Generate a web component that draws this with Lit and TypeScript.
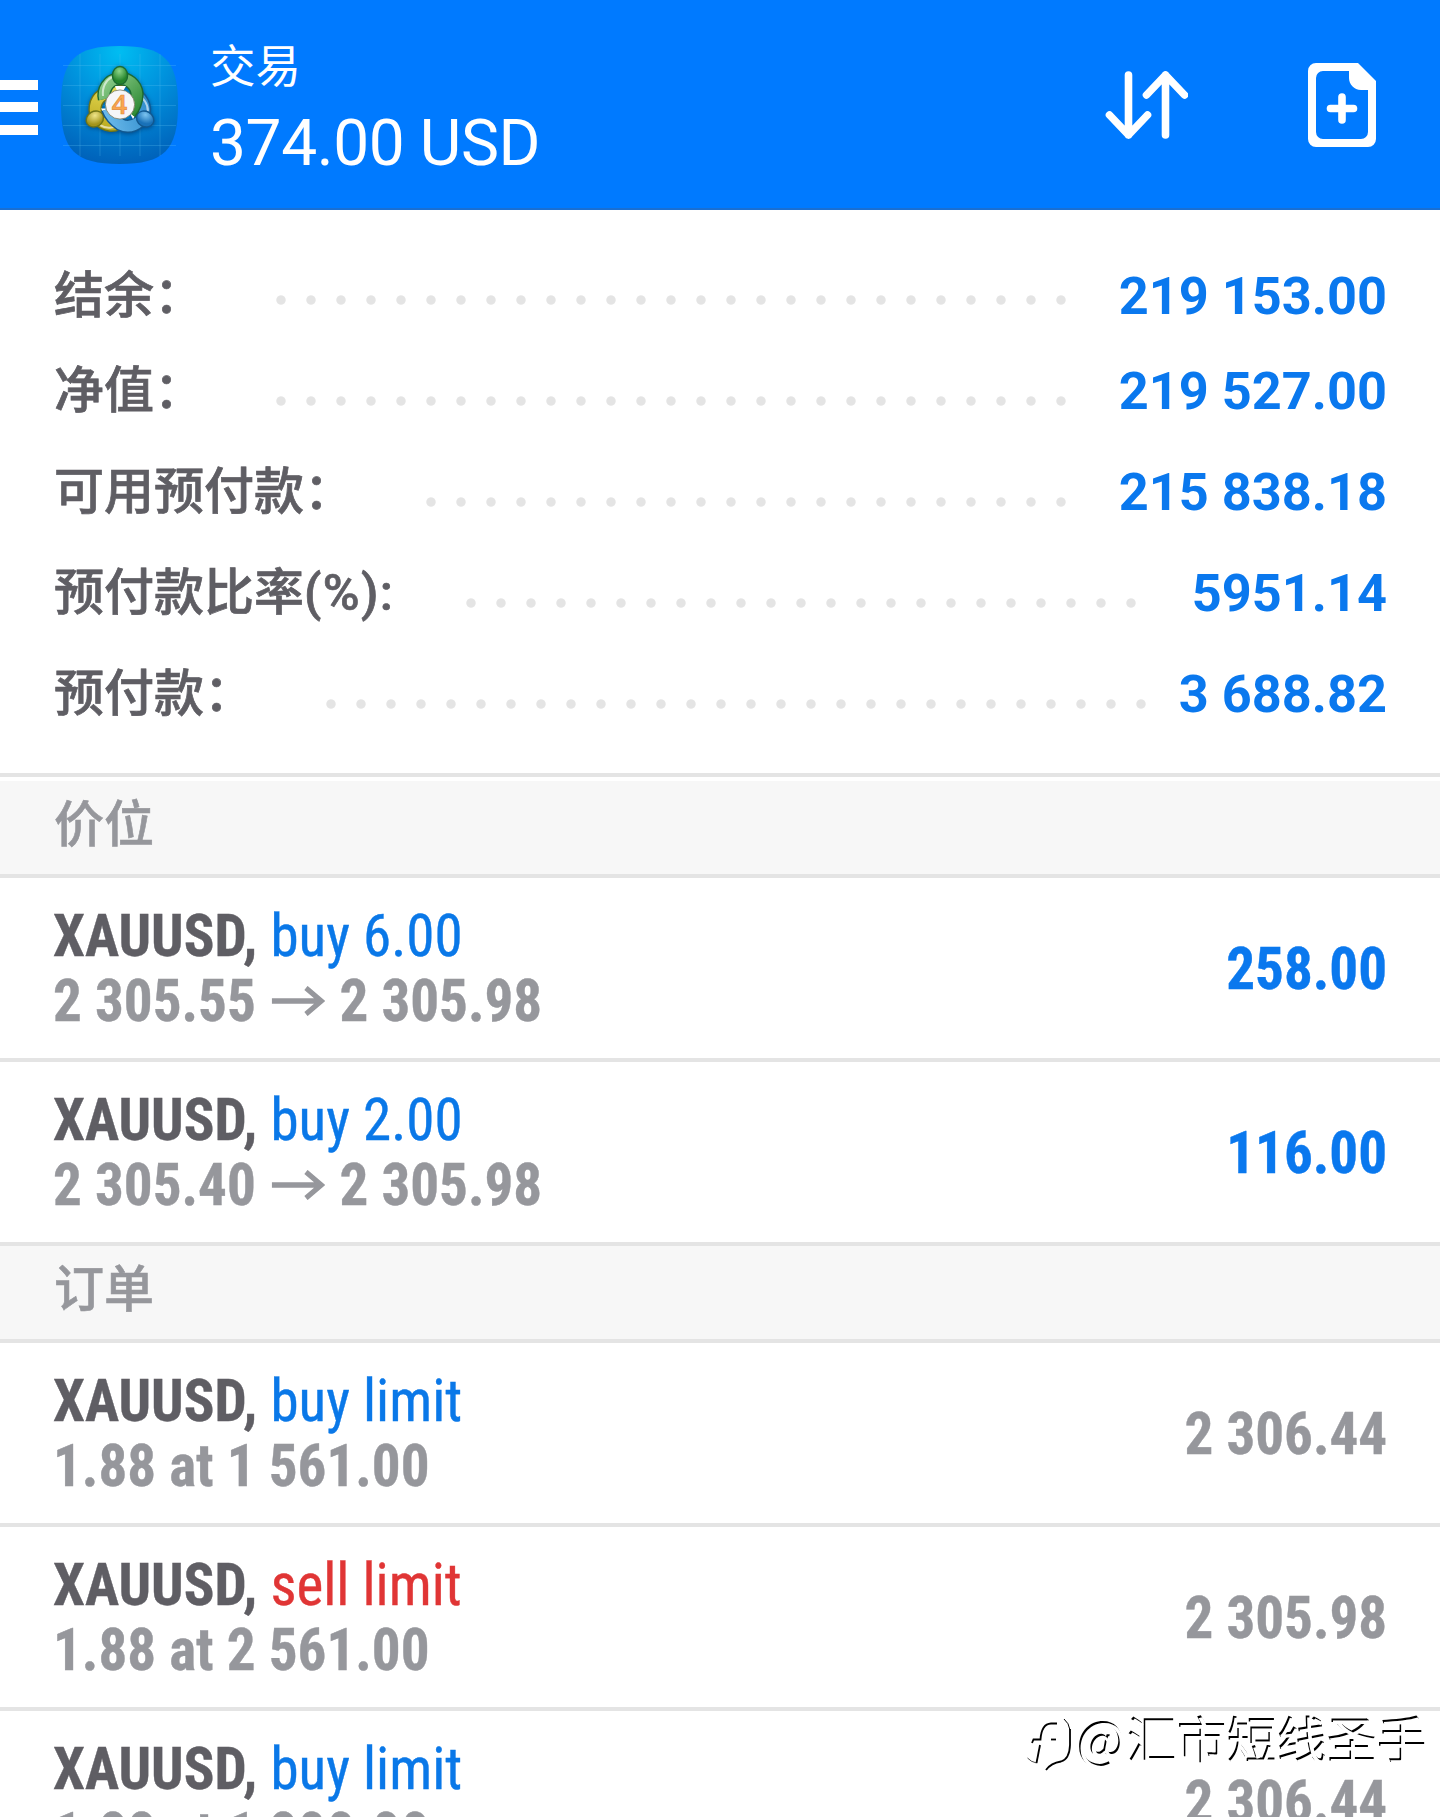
import { LitElement, html, css, svg } from "lit";
import { customElement, property } from "lit/decorators.js";

interface SummaryRow {
  label: string;
  unit?: string;
  value: string;
  dots: number;
}

interface TradeRow {
  symbol: string;
  side: "buy" | "sell";
  action: string;
  detail: string;
  target?: string;
  value: string;
  profit?: boolean;
}

const DOT_PITCH = 30;

const SUMMARY: SummaryRow[] = [
  { label: "结余：", value: "219 153.00", dots: 27 },
  { label: "净值：", value: "219 527.00", dots: 27 },
  { label: "可用预付款：", value: "215 838.18", dots: 22 },
  { label: "预付款比率", unit: "(%):", value: "5951.14", dots: 23 },
  { label: "预付款：", value: "3 688.82", dots: 28 },
];

const POSITIONS: TradeRow[] = [
  { symbol: "XAUUSD", side: "buy", action: "buy 6.00", detail: "2 305.55", target: "2 305.98", value: "258.00", profit: true },
  { symbol: "XAUUSD", side: "buy", action: "buy 2.00", detail: "2 305.40", target: "2 305.98", value: "116.00", profit: true },
];

const ORDERS: TradeRow[] = [
  { symbol: "XAUUSD", side: "buy", action: "buy limit", detail: "1.88 at 1 561.00", value: "2 306.44" },
  { symbol: "XAUUSD", side: "sell", action: "sell limit", detail: "1.88 at 2 561.00", value: "2 305.98" },
  { symbol: "XAUUSD", side: "buy", action: "buy limit", detail: "1.88 at 1 800.00", value: "2 306.44" },
];

const GRID = [19, 39, 59, 79, 99];

const BODY = "M43.5 53 A16.5 16.5 0 1 1 76 48 Q75.5 59 69 67";

// One figure of the trefoil, drawn upright and rotated for the other two.
const member = (angle: number, id: string, edge: string) => svg`
  <g transform="rotate(${angle} 59 58.5)" fill="none">
    <path d=${BODY} stroke=${edge} stroke-width="13.5" />
    <path d=${BODY} stroke="url(#${id})" stroke-width="10.6" />
    <path d="M42 50 C41 41 45 34 51 31" stroke="#fff" stroke-opacity=".6" stroke-width="2" />
    <path d="M54 40 H65 L61 47 H57 Z" fill="#fff" />
    <ellipse cx="59" cy="29.5" rx="7.6" ry="9" fill="url(#${id}h)" stroke=${edge} stroke-width="1.4" />
  </g>
`;

@customElement("app-logo")
export class AppLogo extends LitElement {
  static styles = css`
    :host { display: block; width: 118px; height: 118px; }
    svg { display: block; }
    .figures { filter: drop-shadow(0 1px 2px rgba(0, 40, 90, 0.6)); }
    text { font: 600 27px "Open Sans", sans-serif; }
  `;

  render() {
    return html`
      <svg width="118" height="118" viewBox="0 0 118 118">
        <defs>
          <radialGradient id="bg" cx=".5" cy=".05" r=".95">
            <stop offset="0" stop-color="#00bdf2" />
            <stop offset=".5" stop-color="#008edb" />
            <stop offset="1" stop-color="#0062ba" />
          </radialGradient>
          <linearGradient id="g" x1="0" y1="0" x2="1" y2="1">
            <stop offset="0" stop-color="#8fce8c" /><stop offset="1" stop-color="#2f8a35" />
          </linearGradient>
          <linearGradient id="b" x1="0" y1="0" x2="1" y2="1">
            <stop offset="0" stop-color="#2f8ccc" /><stop offset="1" stop-color="#6ab9ea" />
          </linearGradient>
          <linearGradient id="y" x1="0" y1="0" x2="1" y2="1">
            <stop offset="0" stop-color="#b9a81c" /><stop offset="1" stop-color="#e8dc58" />
          </linearGradient>
          <radialGradient id="gh" cx=".45" cy=".25" r=".8">
            <stop offset="0" stop-color="#8fd68a" /><stop offset=".7" stop-color="#25852c" />
          </radialGradient>
          <radialGradient id="bh" cx=".25" cy=".6" r=".8">
            <stop offset="0" stop-color="#7cc4f0" /><stop offset=".7" stop-color="#1971b8" />
          </radialGradient>
          <radialGradient id="yh" cx=".7" cy=".6" r=".8">
            <stop offset="0" stop-color="#efe68a" /><stop offset=".7" stop-color="#a3941a" />
          </radialGradient>
        </defs>
        <path d="M58.5 0 C103 0 117 14 117 59 C117 104 103 118 58.5 118 C14 118 0 104 0 59 C0 14 14 0 58.5 0 Z" fill="url(#bg)" />
        <g stroke="#5fc4f5" stroke-opacity=".26">
          ${GRID.map((p) => svg`
            <line x1=${p} y1="8" x2=${p} y2="110" />
            <line x1="2" y1=${p + 0.5} x2="115" y2=${p + 0.5} />
          `)}
        </g>
        <g class="figures">
          ${member(240, "y", "#6f7416")}
          ${member(120, "b", "#12588f")}
          ${member(0, "g", "#1c6a30")}
        </g>
        <circle cx="59" cy="58.5" r="14.6" fill="#f6f6f8" stroke="#7a7a60" stroke-width=".8" />
        <text x="58.5" y="68" text-anchor="middle" fill="#fba64e" stroke="#e08a3a" stroke-width=".6">4</text>
      </svg>
    `;
  }
}

@customElement("summary-row")
export class SummaryRowElement extends LitElement {
  static styles = css`
    :host {
      display: flex;
      align-items: flex-start;
      height: 101px;
      line-height: 76px;
    }
    .label {
      font-size: 50px;
      font-weight: 500;
      color: #5f5e64;
      -webkit-text-stroke: 0.7px #5f5e64;
      white-space: nowrap;
    }
    .unit { letter-spacing: 1.4px; }
    .leader {
      height: 10px;
      margin: 43px 0 0 72px;
      background: radial-gradient(circle at 5px 5px, #e4e4e4 4.2px, transparent 5.2px) 0 0 / 30px 10px repeat-x;
    }
    .value {
      margin-left: auto;
      font-size: 52.3px;
      font-weight: 700;
      color: #0a78ee;
      white-space: nowrap;
    }
    /* the first line sits a little closer to its leader */
    :host(:first-child) .label,
    :host(:first-child) .value { margin-top: 6px; }
  `;

  @property({ attribute: false }) row!: SummaryRow;

  render() {
    const { label, unit, value, dots } = this.row;
    return html`
      <span class="label">${label}${unit ? html`<span class="unit">${unit}</span>` : null}</span>
      <span class="leader" style="width: ${dots * DOT_PITCH}px"></span>
      <span class="value">${value}</span>
    `;
  }
}

@customElement("trade-row")
export class TradeRowElement extends LitElement {
  static styles = css`
    :host {
      display: flex;
      justify-content: space-between;
      height: 184px;
      padding: 25px 53px 0 52.5px;
      box-sizing: border-box;
      border-bottom: 4px solid #e4e4e4;
      font-size: 60px;
      font-weight: 700;
      font-stretch: 75%;
      line-height: 65px;
      white-space: nowrap;
      color: #96979c;
      -webkit-text-stroke: 0.4px currentColor;
    }
    .info { transform: scaleX(0.951); transform-origin: left; }
    .symbol { color: #5f5e64; }
    .buy, .sell { font-weight: 400; }
    .buy { color: #0a78e8; }
    .sell { color: #e03535; }
    .detail { display: flex; align-items: center; }
    .arrow { width: 56px; height: 30px; margin: 0 15px 0 17px; }
    .value { margin-top: 33px; transform: scaleX(0.951); transform-origin: right; }
    .profit { color: #0a78ee; }
  `;

  @property({ attribute: false }) row!: TradeRow;

  render() {
    const r = this.row;
    return html`
      <div class="info">
        <div>
          <span class="symbol">${r.symbol},</span>
          <span class=${r.side}>${r.action}</span>
        </div>
        <div class="detail">
          <span>${r.detail}</span>
          ${r.target
            ? html`
                <svg class="arrow" viewBox="0 0 56 30" fill="none" stroke="#96979c" stroke-width="5.4">
                  <path d="M0 15 H52 M36 2 L52 15 L36 28" />
                </svg>
                <span>${r.target}</span>
              `
            : null}
        </div>
      </div>
      <span class="value ${r.profit ? "profit" : ""}">${r.value}</span>
    `;
  }
}

@customElement("app-root")
export class AppRoot extends LitElement {
  static styles = css`
    :host {
      display: block;
      position: relative;
      width: 1440px;
      height: 1817px;
      overflow: hidden;
      background: #fff;
      font-family: Roboto, "Noto Sans CJK SC", sans-serif;
    }
    header {
      display: flex;
      height: 210px;
      box-sizing: border-box;
      border-bottom: 2px solid #1a6fd2;
      background: #007aff;
      color: #fff;
    }
    .menu {
      width: 38px;
      height: 55px;
      margin-top: 80px;
      background: repeating-linear-gradient(#fff 0 10px, transparent 10px 22.5px);
    }
    app-logo { margin: 46px 0 0 23px; }
    .account { margin: 37px 0 0 31px; white-space: nowrap; }
    .title { font-size: 45.5px; line-height: 62px; }
    .total { font-size: 64px; line-height: 90px; letter-spacing: -0.4px; }
    .actions { display: flex; gap: 120px; margin: 62px 64px 0 auto; }
    .new-order { margin-top: 1px; }
    .summary { height: 563px; padding: 42px 53px 0 54px; box-sizing: border-box; }
    .section {
      height: 97px;
      padding: 10px 53px 0 54px;
      box-sizing: border-box;
      border-bottom: 4px solid #e4e4e4;
      background: #f7f7f7;
      color: #96979c;
      font-size: 50px;
      font-weight: 500;
      line-height: 68px;
      -webkit-text-stroke: 0.6px #96979c;
    }
    .rule { height: 4px; margin-bottom: 4px; background: #e4e4e4; }
    .watermark {
      position: absolute;
      right: 12px;
      top: 1703px;
      display: flex;
      align-items: center;
      color: #fff;
      font-family: "Noto Sans CJK SC", sans-serif;
      font-size: 50px;
      line-height: 70px;
      text-shadow: -1.6px -1.6px 0 #000;
    }
    .watermark svg { margin: 14px 3px 0 0; }
    .at { margin-right: 2px; font-size: 51px; }
  `;

  render() {
    return html`
      <header>
        <div class="menu"></div>
        <app-logo></app-logo>
        <div class="account">
          <div class="title">交易</div>
          <div class="total">374.00 USD</div>
        </div>
        <div class="actions">
          <svg width="84" height="86" viewBox="0 0 84 86" fill="none" stroke="#fff" stroke-width="7.6" stroke-linecap="round" stroke-linejoin="round">
            <path d="M24.5 13 V73 M5.5 53 L24.5 73 L43.5 53" />
            <path d="M61.5 73 V13 M42.5 33 L61.5 13 L80.5 33" />
          </svg>
          <svg class="new-order" width="68" height="84" viewBox="0 0 68 84">
            <path fill="#fff" fill-rule="evenodd" d="M8 0 H50 L68 18 V76 a8 8 0 0 1 -8 8 H8 a8 8 0 0 1 -8 -8 V8 a8 8 0 0 1 8 -8 Z M15 8 a7 7 0 0 0 -7 7 V69 a7 7 0 0 0 7 7 H53 a7 7 0 0 0 7 -7 V27 H53 C46 27 41 21 41 15 V8 Z" />
            <path d="M34 34 V57 M22.5 45.5 H45.5" stroke="#fff" stroke-width="7.6" stroke-linecap="round" />
          </svg>
        </div>
      </header>
      <div class="summary">
        ${SUMMARY.map((row) => html`<summary-row .row=${row}></summary-row>`)}
      </div>
      <div class="rule"></div>
      <div class="section">价位</div>
      ${POSITIONS.map((row) => html`<trade-row .row=${row}></trade-row>`)}
      <div class="section">订单</div>
      ${ORDERS.map((row) => html`<trade-row .row=${row}></trade-row>`)}
      <div class="watermark">
        <svg width="48" height="56" viewBox="0 0 48 56" fill="none" stroke="#000" stroke-width="1.8">
          <path d="M5 26 L6.5 22.5 H13.5 Q14.5 7 24 6.5 H30" />
          <path d="M13 28 L9.5 46" />
          <path d="M9.5 46 Q4 45 0.5 41" stroke-width=".7" />
          <path d="M24 22.5 H29" />
          <path d="M37 2 Q42 6 43 13" stroke-width="1" />
          <path d="M43 12 V28 Q42.5 42 34 44.5 Q24 46 19 53" />
        </svg>
        <span class="at">@</span>
        <span>汇市短线圣手</span>
      </div>
    `;
  }
}
